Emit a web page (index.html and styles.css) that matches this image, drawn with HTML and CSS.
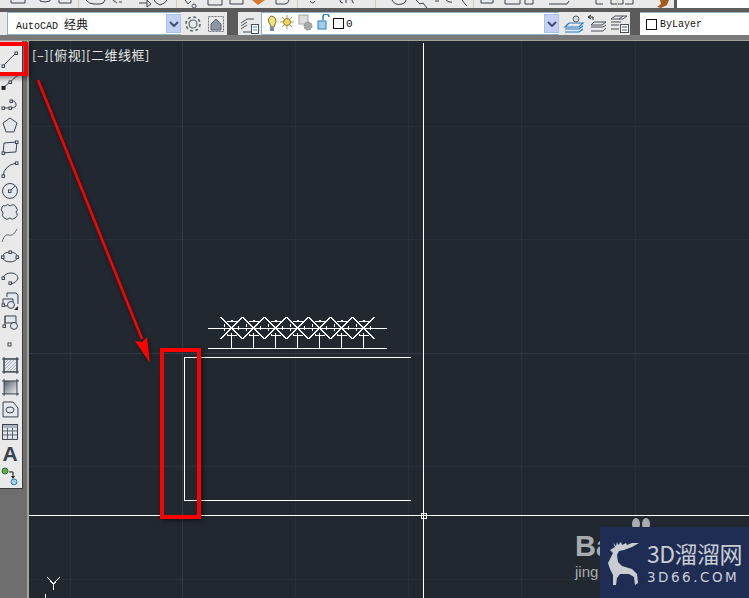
FILE: index.html
```html
<!DOCTYPE html>
<html>
<head>
    <meta charset="UTF-8">
    <title>AutoCAD 经典</title>
    <link rel="stylesheet" href="styles.css">
</head>
<body>
<div class="app">
    <!-- top toolbar, cut off by the crop -->
    <div class="strip-top">
        <svg class="strip-icons" width="643" height="8" viewBox="0 0 643 8">
            <path d="M11 0v3h14V0M40 0v1q5 2 10 0V0M59 0v3h12V0M86 0q3 4 8 4h6q4 0 5-4M113 0l4 3M119 2h3M139 3h8M147 0v7l4-3zM154 0q1 3 6 5 6-2 7-5M185 0l3 4 3-3M194 4a2 2 0 1 0 .1 0M208 0v5h14V0M230 0v4h13V0M276 0v4h9q3 0 4-4M310 1q3 4 5 0M340 0q0 3 3 3M346 0v3M352 0q0 3 2 3M392 0q3 6 10 4 4-1 4-4M416 0l4 4 3-1 4 5M435 1l4 0M446 0l3 2 3 0M462 0l3 4 2 2M481 0v3h12V0M505 0v4h15V0M525 0v4h8V0M549 4h18l2-3M596 0v4h7M611 0v4h12V0M625 4h8V0" fill="none" stroke="#38424e"/>
            <path d="M252 0h13l-7 5z" fill="#d9772b"/>
            <path d="M78.500 0v8M176.500 0v8M297.500 0v8M375.500 0v8M473.500 0v8M617.500 0v8" stroke="#d4cdb2"/>
        </svg>
        <div class="top-gap">
            <svg width="34" height="8" viewBox="0 0 34 8"><path d="M0 0h31V8H0z" fill="#e9e9e9"/><path d="M17 0h9l-2 5-6 3-4-1 4-3z" fill="#a65a1c"/></svg>
        </div>
        <div class="top-white"></div>
    </div>

    <div class="strip-main">
        <div class="group group-work">
            <div class="combo combo-work">
                <span class="combo-text">AutoCAD <span class="cn">经典</span></span>
                <span class="combo-arrow"><svg width="10" height="6" viewBox="0 0 10 6"><path d="M1 1l4 4 4-4" fill="none" stroke="#3d5170" stroke-width="2"/></svg></span>
            </div>
            <svg class="tb-icon" width="22" height="22" viewBox="0 0 22 22">
                <circle cx="11" cy="11" r="4" fill="none" stroke="#5a646e" stroke-width="1.2"/>
                <circle cx="11" cy="11" r="7" fill="none" stroke="#5a646e" stroke-width="1.600" stroke-dasharray="3 2.500"/>
            </svg>
            <svg class="tb-icon" width="22" height="22" viewBox="0 0 22 22">
                <rect x="3.500" y="3.500" width="15" height="15" fill="none" stroke="#6a7480" stroke-dasharray="2 1"/>
                <path d="M6 11l5-5 5 5v6H6z" fill="#8d96a0" stroke="#5a646e"/>
            </svg>
        </div>
        <div class="group group-layer">
            <svg class="tb-icon" width="22" height="22" viewBox="0 0 22 22">
                <path d="M2 10l6-4h7M2 13l6-4M2 16l6-4M4 19h8" fill="none" stroke="#46505c"/>
                <rect x="12.500" y="11.500" width="7" height="9" fill="#fff" stroke="#46505c"/>
                <path d="M14 14h4M14 17h4" stroke="#4c8fc6"/>
            </svg>
            <div class="combo combo-layer">
                <svg class="layer-state" width="65" height="20" viewBox="0 0 65 20">
                    <path d="M4 2a5 5 0 0 1 4 8l-1 3H4L3 10a5 5 0 0 1 1-8z" fill="#f6e27a" stroke="#6d6a44"/>
                    <rect x="3" y="13" width="4" height="4" fill="#7a8a98"/>
                    <circle cx="20" cy="8" r="3.500" fill="#f5d65a" stroke="#8e7a30"/>
                    <path d="M20 1v3M20 12v3M13 8h3M24 8h3M15 3l2 2M23 11l2 2M15 13l2-2M23 5l2-2" stroke="#b09a4a"/>
                    <rect x="32" y="1" width="9" height="9" fill="#ddd" stroke="#a4a4a4"/>
                    <circle cx="41" cy="12" r="4" fill="#a8a8a8" stroke="#8c8c8c" stroke-dasharray="2 1"/>
                    <path d="M56 6V3a3 3 0 0 1 6 0" fill="none" stroke="#2d7fb5" stroke-width="1.500"/>
                    <rect x="51" y="7" width="8" height="8" fill="#9fd0ea" stroke="#2d7fb5"/>
                </svg>
                <span class="swatch"></span>
                <span class="combo-text layer-name">0</span>
                <span class="combo-arrow"><svg width="10" height="6" viewBox="0 0 10 6"><path d="M1 1l4 4 4-4" fill="none" stroke="#3d5170" stroke-width="2"/></svg></span>
            </div>
            <svg class="tb-icon" width="22" height="22" viewBox="0 0 22 22">
                <circle cx="13" cy="6" r="3" fill="#cfd8e0" stroke="#5a646e"/>
                <path d="M6 10h14l-4 4H2zM2 16h14l4-3M2 19h14l4-3" fill="none" stroke="#1f78c4" stroke-width="1.200"/>
            </svg>
            <svg class="tb-icon" width="22" height="22" viewBox="0 0 22 22">
                <path d="M2 4h5M2 4l3-2M2 4l3 2M7 4v3" fill="none" stroke="#222"/>
                <path d="M8 9h12l-4 3H5zM5 14h12l3-2M5 18h12l3-3" fill="none" stroke="#46505c"/>
            </svg>
            <svg class="tb-icon" width="22" height="22" viewBox="0 0 22 22">
                <path d="M6 3h12l-4 3H2zM2 9h10M2 12h8M2 16h8M14 3l-4 3" fill="none" stroke="#46505c"/>
                <rect x="11.500" y="11.500" width="8" height="8" fill="#fff" stroke="#46505c"/>
                <path d="M13 14h5M13 17h5" stroke="#46505c"/>
            </svg>
        </div>
        <div class="group group-prop">
            <div class="combo combo-prop">
                <span class="swatch"></span>
                <span class="combo-text">ByLayer</span>
            </div>
        </div>
    </div>
    <div class="strip-gap"></div>

    <div class="work">
        <div class="side">
            <div class="side-tools">
                <svg class="tool" viewBox="0 0 22 22"><path d="M3 17L16 4"/><rect class="nd" x="2" y="16" width="2.500" height="2.500"/><rect class="nd" x="15" y="3" width="2.500" height="2.500"/></svg>
                <svg class="tool" viewBox="0 0 22 22"><path d="M3 17L17 5"/><rect class="nd-dark" x="1.500" y="15" width="4" height="4"/><rect class="nd" x="9" y="10" width="2.500" height="2.500"/></svg>
                <svg class="tool" viewBox="0 0 22 22"><path d="M3 15h8q6 0 5-4t-5-3"/><rect class="nd" x="2" y="14" width="2.500" height="2.500"/><rect class="nd" x="9" y="14" width="2.500" height="2.500"/><rect class="nd" x="10" y="7" width="2.500" height="2.500"/></svg>
                <svg class="tool" viewBox="0 0 22 22"><path class="fl" d="M10 3l7 5-3 9H6L3 8z"/></svg>
                <svg class="tool" viewBox="0 0 22 22"><path class="fl" d="M4 6l13-1-1 10-13 1z"/><rect class="nd" x="2" y="15" width="2.500" height="2.500"/><rect class="nd" x="15.500" y="4" width="2.500" height="2.500"/></svg>
                <svg class="tool" viewBox="0 0 22 22"><path d="M3 18Q4 8 16 5"/><rect class="nd" x="2" y="17" width="2.500" height="2.500"/><rect class="nd" x="15.500" y="4" width="2.500" height="2.500"/></svg>
                <svg class="tool" viewBox="0 0 22 22"><circle class="fl" cx="10" cy="11" r="7.500"/><path d="M10 11l5-5"/><rect class="nd" x="8.500" y="10" width="2.500" height="2.500"/></svg>
                <svg class="tool" viewBox="0 0 22 22"><path class="fl" d="M5 4q3-3 5 0 4-3 6 1 3 3 0 5 3 4-1 6-3 3-5 0-3 3-6 0-3-2-1-5-3-3-1-6 1-2 3-1z"/></svg>
                <svg class="tool" viewBox="0 0 22 22"><path class="soft" d="M2 18C7 3 10 19 17 5"/></svg>
                <svg class="tool" viewBox="0 0 22 22"><ellipse class="fl" cx="10" cy="11" rx="7.500" ry="5"/><rect class="nd" x="1.500" y="10" width="2.500" height="2.500"/><rect class="nd" x="9" y="5" width="2.500" height="2.500"/><rect class="nd" x="16" y="10" width="2.500" height="2.500"/></svg>
                <svg class="tool" viewBox="0 0 22 22"><path d="M3 10Q5 5 11 5t7 5q-1 5-8 6"/><rect class="nd" x="2" y="9" width="2.500" height="2.500"/><rect class="nd" x="9" y="14" width="2.500" height="2.500"/></svg>
                <svg class="tool" viewBox="0 0 22 22"><path class="fl" d="M7 7V3h9l2 2v9"/><path class="fl" d="M3 9h10v7H3z"/><circle class="fl" cx="11" cy="15" r="3.500"/><rect class="nd" x="2" y="14" width="2.500" height="2.500"/><path class="blk" d="M14 20l4-4v4z"/></svg>
                <svg class="tool" viewBox="0 0 22 22"><path class="fl" d="M5 4h11v7H5z"/><path d="M5 4v11"/><circle class="fl" cx="14" cy="14" r="3.500"/><rect class="nd" x="3" y="13" width="2.500" height="2.500"/></svg>
                <svg class="tool" viewBox="0 0 22 22"><rect class="nd" x="8" y="9" width="3" height="3"/></svg>
                <svg class="tool" viewBox="0 0 22 22"><rect class="fl" x="4" y="4" width="13" height="13"/><path class="hatch" d="M5 8l3-3M5 11l6-6M5 14l9-9M7 16l9-9M10 16l6-6M13 16l3-3"/><path d="M2 4h17M4 2v17M2 17h17M17 2v17"/></svg>
                <svg class="tool" viewBox="0 0 22 22"><defs><linearGradient id="grad" x1="0" y1="0" x2="1" y2="1"><stop offset="0" stop-color="#55606b"/><stop offset="1" stop-color="#f0f0f0"/></linearGradient></defs><rect class="no-line" x="4" y="4" width="13" height="13" fill="url(#grad)"/><path d="M2 4h17M4 2v17M2 17h17M17 2v17"/></svg>
                <svg class="tool" viewBox="0 0 22 22"><path class="fl" d="M3 3h10l5 6v9H3z"/><ellipse cx="10" cy="11" rx="4" ry="3"/></svg>
                <svg class="tool" viewBox="0 0 22 22"><rect class="fl" x="2.500" y="3.500" width="15" height="15"/><path class="thead" d="M3 4h14v3H3z"/><path class="soft" d="M3 10h14M3 14h14M7.500 7v11M12.500 7v11"/></svg>
                <div class="tool tool-a">A</div>
                <svg class="tool" viewBox="0 0 22 22"><circle class="green" cx="5" cy="6" r="3"/><path class="stp" d="M9 7h4v4"/><path class="blk" d="M11 11h4l-2 3z"/><circle class="blue" cx="14" cy="17" r="3"/></svg>
            </div>
            <div class="side-rest"></div>
        </div>

        <div class="canvas">
            <svg class="drawing" width="720" height="557" viewBox="29 41 720 557">
                <defs>
                    <g id="tree">
                        <path d="M-11 317L11 339M11 317L-11 339M0 333V348M-5 335H5M-5 321H5"/>
                        <circle cx="0" cy="328" r="7.500" stroke-dasharray="2 3"/>
                    </g>
                </defs>
                <path class="grid" d="M70.500 41V598M295.500 41V598M408.500 41V598M521.500 41V598M635.500 41V598M29 126.500H749M29 239.500H749M29 466.500H749M29 579.500H749"/>
                <path class="grid-major" d="M182.500 41V598M29 353.500H749"/>
                <g class="cad">
                    <path d="M387 328.500H208M208 348.500H387M410.500 357.500H184.500V500.500H411"/>
                    <use href="#tree" x="231.500"/>
                    <use href="#tree" x="253.500"/>
                    <use href="#tree" x="275.500"/>
                    <use href="#tree" x="297.500"/>
                    <use href="#tree" x="319.500"/>
                    <use href="#tree" x="341.500"/>
                    <use href="#tree" x="363.500"/>
                    <path d="M423.500 43V598M29 515.500H749"/>
                    <rect x="421" y="513" width="5" height="5" class="pick"/>
                    <path d="M47 577L53.500 584L60 577M53.500 584V590M45.500 594V598"/>
                </g>
            </svg>
            <div class="view-label">[–][俯视][二维线框]</div>

            <div class="mark">
                <div class="mark-paw"><span></span><span></span></div>
                <div class="mark-ba">Ba</div>
                <div class="mark-jing">jing</div>
                <div class="mark-box">
                    <svg class="deer" width="32" height="43" viewBox="0 0 32 43">
                        <path d="M2 8L7 5L5 1L8 4L9 0L10 3L13 0L14 3L18 1L19 3L24 1L31 1L24 5L16 8L11 9L9 13L10 20L14 24L24 27L29 32L30 41L27 43L26 35L21 32L12 32L9 36L8 43L5 43L5 33L2 27L0 21L3 15L5 11z" fill="#c9cdd2"/>
                    </svg>
                    <div class="mark-text">
                        <div class="mark-cn">3D溜溜网</div>
                        <div class="mark-en">3D66.COM</div>
                    </div>
                </div>
            </div>
        </div>
    </div>

    <!-- red marks that were drawn over the screenshot -->
    <div class="mark-red mark-red-tool"></div>
    <div class="mark-red mark-red-rect"></div>
    <svg class="mark-arrow" width="749" height="598" viewBox="0 0 749 598">
        <path d="M38 80L142 339" fill="none" stroke="#f00" stroke-width="2.600"/>
        <path d="M150 363L135 341L142 342L147 337z" fill="#f00"/>
    </svg>
</div>
</body>
</html>
```
FILE: styles.css
```css
body {
    margin: 0;
    padding: 0;
    background: #6e6e6e;
    font-family: "Liberation Mono", "Noto Sans CJK SC", monospace;
    overflow: hidden;
}

.app {
    position: relative;
    width: 749px;
    height: 598px;
    display: flex;
    flex-direction: column;
    overflow: hidden;
}

/* toolbars */
.strip-top {
    display: flex;
    height: 8px;
    background: #e9e9e9;
    border-bottom: 4px solid #5b5b5b;
    overflow: hidden;
}

.strip-icons {
    flex: none;
    display: block;
}

.top-gap {
    width: 34px;
    flex: none;
    background: #5b5b5b;
}

.top-gap svg {
    display: block;
}

.top-white {
    flex: 1;
    background: #fff;
}

.strip-main {
    display: flex;
    height: 23px;
    background: #5b5b5b;
}

.group {
    display: flex;
    align-items: center;
    background: #e9e9e9;
}

.group-work {
    width: 227px;
    padding-left: 7px;
    box-sizing: border-box;
}

.group-layer {
    width: 392px;
    margin-left: 11px;
}

.group-prop {
    flex: 1;
    margin-left: 10px;
    background: #fff;
}

.strip-gap {
    height: 5px;
    background: #7a7a7a;
    border-bottom: 1px solid #a6a297;
}

.combo {
    display: flex;
    flex: none;
    align-items: center;
    height: 23px;
    box-sizing: border-box;
    background: #fff;
    border: 1px solid #8fb0c6;
    border-width: 1px 0 1px 1px;
    color: #111;
    font-size: 10px;
    position: relative;
}

.combo .cn {
    font-size: 12px;
}

.combo-work {
    width: 174px;
    padding-left: 8px;
}

.combo-layer {
    width: 298px;
    padding-left: 5px;
    margin-right: 3px;
}

.combo-prop {
    width: 100%;
    padding-left: 5px;
    border: 0;
    border-top: 1px solid #8fb0c6;
}

.combo-arrow {
    position: absolute;
    right: 0;
    top: 1px;
    width: 15px;
    height: 19px;
    display: flex;
    align-items: center;
    justify-content: center;
    background: #c3d2f4;
    border: 1px solid #adc0e8;
    box-sizing: border-box;
}

.combo-prop .combo-text {
    margin-left: 3px;
}

.layer-state {
    flex: none;
}

.layer-name {
    margin-left: 2px;
    font-size: 11px;
}

.swatch {
    width: 9px;
    height: 9px;
    border: 1px solid #111;
    margin-left: 1px;
    flex: none;
}

.tb-icon {
    flex: none;
    margin-left: 1px;
}

/* left draw toolbar */
.work {
    flex: 1;
    display: flex;
    min-height: 0;
}

.side {
    width: 29px;
    flex: none;
    display: flex;
    flex-direction: column;
    background: #6e6e6e;
    border-right: 2px solid #a6a297;
    box-sizing: border-box;
}

.side-tools {
    width: 23px;
    height: 448px;
    flex: none;
    padding-top: 8px;
    box-sizing: border-box;
    background: #e9e9e9;
    border-right: 1px solid #3c3c3c;
    border-bottom: 1px solid #3c3c3c;
    display: flex;
    flex-direction: column;
}

.side-rest {
    flex: 1;
}

.tool {
    width: 22px;
    height: 21.900px;
    flex: none;
    fill: none;
    stroke: #38424e;
    stroke-width: 1;
}

.tool .nd {
    fill: #fff;
}

.tool .nd-dark,
.tool .blk {
    fill: #222;
    stroke: none;
}

.tool .fl {
    fill: #e4e8ec;
}

.tool .soft {
    stroke: #59636e;
}

.tool .hatch {
    stroke: #a8aeb5;
}

.tool .thead {
    fill: #a9b2bb;
    stroke: none;
}

.tool .no-line {
    stroke: none;
}

.tool .green {
    fill: #62b04a;
    stroke: #2f6b2a;
}

.tool .blue {
    fill: #9fd0f0;
    stroke: #2d7fc5;
}

.tool .stp {
    stroke: #111;
}

.tool-a {
    font-family: "Liberation Sans", sans-serif;
    font-size: 21px;
    font-weight: bold;
    line-height: 22px;
    text-align: center;
    color: #38424e;
    margin-left: -1px;
}

/* model space */
.canvas {
    flex: 1;
    position: relative;
    background: #212830;
    overflow: hidden;
}

.drawing {
    position: absolute;
    left: 0;
    top: 0;
    display: block;
}

.grid {
    stroke: #29303a;
    stroke-width: 1;
    fill: none;
}

.grid-major {
    stroke: #343b47;
    stroke-width: 1;
    fill: none;
}

.cad {
    fill: none;
    stroke: #fff;
    stroke-width: 1;
    shape-rendering: crispEdges;
}

.view-label {
    position: absolute;
    left: 3px;
    top: 6px;
    color: #e8e8e8;
    font-family: "Noto Sans CJK SC", sans-serif;
    font-size: 13px;
    letter-spacing: 0.500px;
    line-height: 15px;
    white-space: nowrap;
}

/* watermarks */
.mark {
    position: absolute;
    right: 0;
    bottom: 0;
    width: 174px;
    height: 80px;
}

.mark-paw {
    position: absolute;
    left: 57px;
    top: 0;
    display: flex;
    gap: 2px;
}

.mark-paw span {
    width: 8px;
    height: 12px;
    border-radius: 50%;
    background: #a9acaf;
}

.mark-ba {
    position: absolute;
    left: 0;
    top: 13px;
    color: #a9acaf;
    font-family: "Liberation Sans", sans-serif;
    font-weight: bold;
    font-size: 29px;
    line-height: 30px;
}

.mark-jing {
    position: absolute;
    left: 0;
    top: 46px;
    color: #a9acaf;
    font-family: "Liberation Sans", sans-serif;
    font-size: 15px;
    line-height: 16px;
}

.mark-box {
    position: absolute;
    left: 25px;
    top: 9px;
    right: 0;
    bottom: 0;
    background: #1f2d55;
    display: flex;
    padding: 14px 0 0 8px;
    box-sizing: border-box;
    color: #c9cdd2;
}

.deer {
    flex: none;
    margin-top: 1px;
}

.mark-text {
    margin-left: 7px;
    width: 94px;
}

.mark-cn {
    font-family: "Noto Sans CJK SC", sans-serif;
    font-size: 23px;
    line-height: 24px;
    white-space: nowrap;
    letter-spacing: -0.500px;
}

.mark-en {
    font-family: "DejaVu Sans", sans-serif;
    font-size: 13.500px;
    line-height: 14px;
    margin-top: 5px;
    letter-spacing: 2.500px;
    white-space: nowrap;
}

/* red annotations */
.mark-red {
    position: absolute;
    box-sizing: border-box;
    border: 4px solid #f00;
    box-shadow: 2px 2px 5px rgba(0, 0, 0, 0.45);
}

.mark-red-tool {
    left: -6px;
    top: 42px;
    width: 34px;
    height: 34px;
}

.mark-red-rect {
    left: 160px;
    top: 348px;
    width: 41px;
    height: 171px;
}

.mark-arrow {
    position: absolute;
    left: 0;
    top: 0;
    pointer-events: none;
    filter: drop-shadow(1px 2px 2px rgba(0, 0, 0, 0.5));
}
```
